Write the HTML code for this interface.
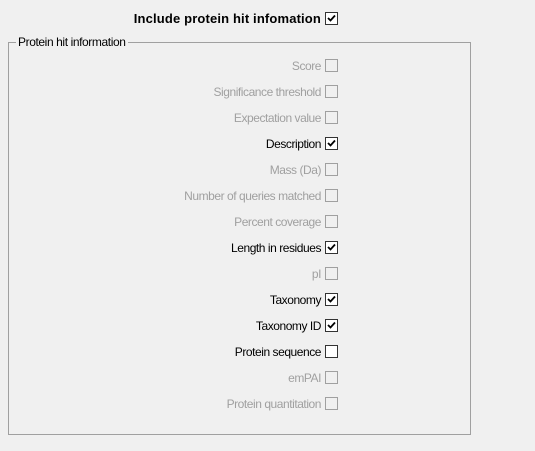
<html><head><style>
body{margin:0;width:535px;height:451px;background:#f0f0f0;font-family:"Liberation Sans",Arial,sans-serif;font-size:12px;position:relative;overflow:hidden}
.box{position:absolute;left:8px;top:42px;width:463px;height:393px;border:1px solid #a0a0a0;box-sizing:border-box}
.leg{position:absolute;left:16px;top:35px;background:#f0f0f0;padding:0 2px;color:#000;font-size:12px;letter-spacing:-0.4px}
.row{position:absolute;right:214px;height:14px;line-height:14px;white-space:nowrap;letter-spacing:-0.45px}
.cb{position:absolute;left:325px;width:11px;height:11px;border:1px solid #333;background:#fff}
.cb.d{border-color:#a0a0a0;background:#f0f0f0}
.g{color:#a0a0a0}
svg{position:absolute;left:1px;top:1px}
</style></head><body>
<div class="row" style="top:12px;font-weight:bold;font-size:13px;letter-spacing:0.15px">Include protein hit infomation</div>
<div class="cb" style="top:12px"><svg width="9" height="9" viewBox="0 0 9 9"><path d="M1 4 L3.5 6.5 L8 1.5" stroke="#000" stroke-width="1.8" fill="none"/></svg></div>
<div class="box"></div>
<div class="leg">Protein hit information</div>

<div class="row g" style="top:59px">Score</div><div class="cb d" style="top:59px"></div>
<div class="row g" style="top:85px">Significance threshold</div><div class="cb d" style="top:85px"></div>
<div class="row g" style="top:111px">Expectation value</div><div class="cb d" style="top:111px"></div>
<div class="row" style="top:137px">Description</div><div class="cb" style="top:137px"><svg width="9" height="9" viewBox="0 0 9 9"><path d="M1 4 L3.5 6.5 L8 1.5" stroke="#000" stroke-width="1.8" fill="none"/></svg></div>
<div class="row g" style="top:163px">Mass (Da)</div><div class="cb d" style="top:163px"></div>
<div class="row g" style="top:189px">Number of queries matched</div><div class="cb d" style="top:189px"></div>
<div class="row g" style="top:215px">Percent coverage</div><div class="cb d" style="top:215px"></div>
<div class="row" style="top:241px">Length in residues</div><div class="cb" style="top:241px"><svg width="9" height="9" viewBox="0 0 9 9"><path d="M1 4 L3.5 6.5 L8 1.5" stroke="#000" stroke-width="1.8" fill="none"/></svg></div>
<div class="row g" style="top:267px">pI</div><div class="cb d" style="top:267px"></div>
<div class="row" style="top:293px">Taxonomy</div><div class="cb" style="top:293px"><svg width="9" height="9" viewBox="0 0 9 9"><path d="M1 4 L3.5 6.5 L8 1.5" stroke="#000" stroke-width="1.8" fill="none"/></svg></div>
<div class="row" style="top:319px">Taxonomy ID</div><div class="cb" style="top:319px"><svg width="9" height="9" viewBox="0 0 9 9"><path d="M1 4 L3.5 6.5 L8 1.5" stroke="#000" stroke-width="1.8" fill="none"/></svg></div>
<div class="row" style="top:345px">Protein sequence</div><div class="cb" style="top:345px"></div>
<div class="row g" style="top:371px">emPAI</div><div class="cb d" style="top:371px"></div>
<div class="row g" style="top:397px">Protein quantitation</div><div class="cb d" style="top:397px"></div>
</body></html>
